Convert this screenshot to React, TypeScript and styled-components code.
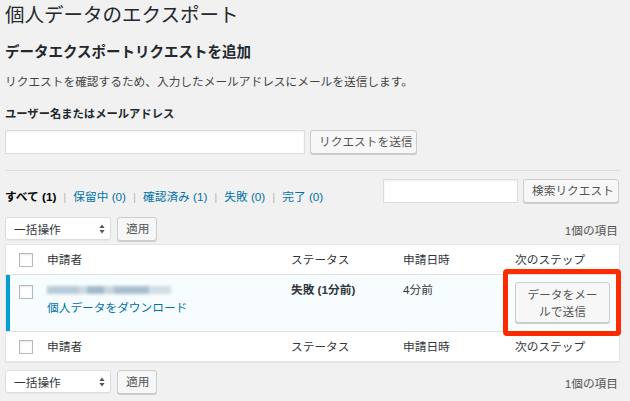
import React from 'react'
import styled, { createGlobalStyle } from 'styled-components'

const GlobalStyle = createGlobalStyle`
  html, body {
    margin: 0;
    padding: 0;
    background: #f1f1f1;
  }
  body {
    font-family: "Liberation Sans", "Noto Sans CJK JP", sans-serif;
    font-size: 11.7px;
    color: #444;
  }
`

const Page = styled.div`
  width: 630px;
  height: 401px;
  overflow: hidden;
  box-sizing: border-box;
  padding: 1px 10px 0 5px;
`
const Title = styled.h1`
  margin: 0;
  font-size: 19.5px;
  line-height: 28px;
  font-weight: 400;
  color: #23282d;
`
const SectionTitle = styled.h2`
  margin: 13px 0 0;
  font-size: 14.5px;
  line-height: 20px;
  font-weight: 700;
  color: #23282d;
`
const Description = styled.p`
  margin: 11px 0 0;
  line-height: 18px;
  color: #444;
`
const FieldLabel = styled.div`
  margin-top: 14px;
  font-size: 11.3px;
  line-height: 18px;
  font-weight: 700;
  color: #23282d;
`
const FormRow = styled.div`
  display: flex;
  gap: 5px;
  margin-top: 7px;
`
const TextInput = styled.input<{ $width: number }>`
  width: ${({ $width }) => $width}px;
  height: 24px;
  box-sizing: border-box;
  margin: 0;
  padding: 0 6px;
  background: #fff;
  border: 1px solid #ddd;
  box-shadow: inset 0 1px 2px rgba(0, 0, 0, 0.07);
  font: inherit;
  outline: none;
`
const Button = styled.button<{ $width: number; $tall?: boolean }>`
  width: ${({ $width }) => $width}px;
  height: ${({ $tall }) => ($tall ? '41px' : '24px')};
  box-sizing: border-box;
  margin: 0;
  padding: ${({ $tall }) => ($tall ? '3px 6px' : '0 8px')};
  background: #f7f7f7;
  border: 1px solid #ccc;
  border-radius: 3px;
  box-shadow: 0 1px 0 #ccc;
  color: #555;
  font: inherit;
  line-height: ${({ $tall }) => ($tall ? '17px' : '22px')};
  white-space: nowrap;
  cursor: pointer;
`
const Divider = styled.hr`
  margin: 16px 0 0;
  border: 0;
  border-top: 1px solid #ddd;
`
const FilterBar = styled.div`
  display: flex;
  justify-content: space-between;
  height: 24px;
  margin-top: 8px;
`
const StatusLinks = styled.div`
  display: flex;
  gap: 7px;
  padding-top: 9px;
  line-height: 18px;
`
const Current = styled.span`
  font-weight: 700;
  color: #000;
`
const FilterLink = styled.a`
  color: #0073aa;
  text-decoration: none;
`
const Separator = styled.span`
  color: #b4b9be;
`
const SearchBox = styled.div`
  display: flex;
  gap: 5px;
  padding-right: 1px;
`
const TableNav = styled.div<{ $gap: number }>`
  display: flex;
  align-items: center;
  justify-content: space-between;
  margin-top: ${({ $gap }) => $gap}px;
  height: 24px;
`
const Actions = styled.div`
  display: flex;
  gap: 6px;
`
const Select = styled.div`
  width: 106px;
  height: 23px;
  box-sizing: border-box;
  display: flex;
  align-items: center;
  justify-content: space-between;
  padding: 0 5px 0 8px;
  background: #fff;
  border: 1px solid #ddd;
  border-radius: 3px;
  box-shadow: 0 1px 1px rgba(0, 0, 0, 0.04);
  color: #32373c;
`
const ItemCount = styled.div`
  padding-right: 2px;
  color: #555;
`
const Table = styled.div`
  margin-top: 3px;
  background: #fff;
  border: 1px solid #e5e5e5;
  box-shadow: 0 1px 1px rgba(0, 0, 0, 0.04);
  color: #32373c;
`
const Row = styled.div<{ $kind: 'head' | 'item' | 'foot' }>`
  display: grid;
  grid-template-columns: 41px 244px 112px 112px 1fr;
  height: ${({ $kind }) => ($kind === 'item' ? '56px' : '29px')};
  background: ${({ $kind }) => ($kind === 'item' ? '#f7fcfe' : '#fff')};
  box-shadow: ${({ $kind }) => ($kind === 'item' ? 'inset 4px 0 0 #00a0d2' : 'none')};
  border-bottom: ${({ $kind }) => ($kind === 'head' ? '1px solid #e1e1e1' : '0')};
  border-top: ${({ $kind }) => ($kind === 'foot' ? '1px solid #e1e1e1' : '0')};
  align-items: ${({ $kind }) => ($kind === 'item' ? 'start' : 'center')};
  line-height: 18px;
`
const Cell = styled.div<{ $top?: number }>`
  position: relative;
  padding-top: ${({ $top }) => $top ?? 0}px;
`
const CheckCell = styled.div<{ $top?: number }>`
  padding: ${({ $top }) => $top ?? 0}px 0 0 13px;
`
const Checkbox = styled.span`
  display: block;
  width: 14px;
  height: 14px;
  box-sizing: border-box;
  background: #fff;
  border: 1px solid #b4b9be;
  box-shadow: inset 0 1px 2px rgba(0, 0, 0, 0.1);
`
const BlurredEmail = styled.span`
  display: block;
  width: 124px;
  height: 8px;
  margin: 5px 0 5px;
  background: linear-gradient(
    90deg,
    #b9cbd8 0 26%,
    #cbd9e2 26% 32%,
    #a3bacb 32% 46%,
    #c8d6e0 46% 54%,
    #a9bfce 54% 82%,
    #d2dee6 82% 100%
  );
  filter: blur(1.4px);
`
const DownloadLink = styled.a`
  display: block;
  color: #0073aa;
  text-decoration: none;
`
const Strong = styled.span`
  font-weight: 700;
`
const Highlight = styled.span`
  position: absolute;
  left: -12px;
  top: -6px;
  width: 118px;
  height: 67px;
  box-sizing: border-box;
  border: 5px solid #ff2a00;
  border-radius: 4px;
  pointer-events: none;
`

const SelectArrows = () => (
  <svg width="6" height="10" viewBox="0 0 6 10">
    <path d="M3 0.5 L5.6 4 L0.4 4 Z" fill="#555" />
    <path d="M3 9.5 L5.6 6 L0.4 6 Z" fill="#555" />
  </svg>
)

const BulkBar = ({ gap }: { gap: number }) => (
  <TableNav $gap={gap}>
    <Actions>
      <Select>
        一括操作
        <SelectArrows />
      </Select>
      <Button $width={40}>適用</Button>
    </Actions>
    <ItemCount>1個の項目</ItemCount>
  </TableNav>
)

const HeaderRow = ({ kind }: { kind: 'head' | 'foot' }) => (
  <Row $kind={kind}>
    <CheckCell>
      <Checkbox />
    </CheckCell>
    <Cell>申請者</Cell>
    <Cell>ステータス</Cell>
    <Cell>申請日時</Cell>
    <Cell>次のステップ</Cell>
  </Row>
)

const App = () => {
  return (
    <Page>
      <GlobalStyle />
      <Title>個人データのエクスポート</Title>
      <SectionTitle>データエクスポートリクエストを追加</SectionTitle>
      <Description>
        リクエストを確認するため、入力したメールアドレスにメールを送信します。
      </Description>
      <FieldLabel>ユーザー名またはメールアドレス</FieldLabel>
      <FormRow>
        <TextInput $width={300} />
        <Button $width={107}>リクエストを送信</Button>
      </FormRow>
      <Divider />
      <FilterBar>
        <StatusLinks>
          <Current>すべて (1)</Current>
          <Separator>|</Separator>
          <FilterLink>保留中 (0)</FilterLink>
          <Separator>|</Separator>
          <FilterLink>確認済み (1)</FilterLink>
          <Separator>|</Separator>
          <FilterLink>失敗 (0)</FilterLink>
          <Separator>|</Separator>
          <FilterLink>完了 (0)</FilterLink>
        </StatusLinks>
        <SearchBox>
          <TextInput $width={135} />
          <Button $width={96}>検索リクエスト</Button>
        </SearchBox>
      </FilterBar>
      <BulkBar gap={14} />
      <Table>
        <HeaderRow kind="head" />
        <Row $kind="item">
          <CheckCell $top={10}>
            <Checkbox />
          </CheckCell>
          <Cell $top={6}>
            <BlurredEmail />
            <DownloadLink>個人データをダウンロード</DownloadLink>
          </Cell>
          <Cell $top={6}>
            <Strong>失敗 (1分前)</Strong>
          </Cell>
          <Cell $top={6}>4分前</Cell>
          <Cell $top={7}>
            <Button $width={95} $tall>
              データをメー
              <br />
              ルで送信
            </Button>
            <Highlight />
          </Cell>
        </Row>
        <HeaderRow kind="foot" />
      </Table>
      <BulkBar gap={8} />
    </Page>
  )
}

export default App
